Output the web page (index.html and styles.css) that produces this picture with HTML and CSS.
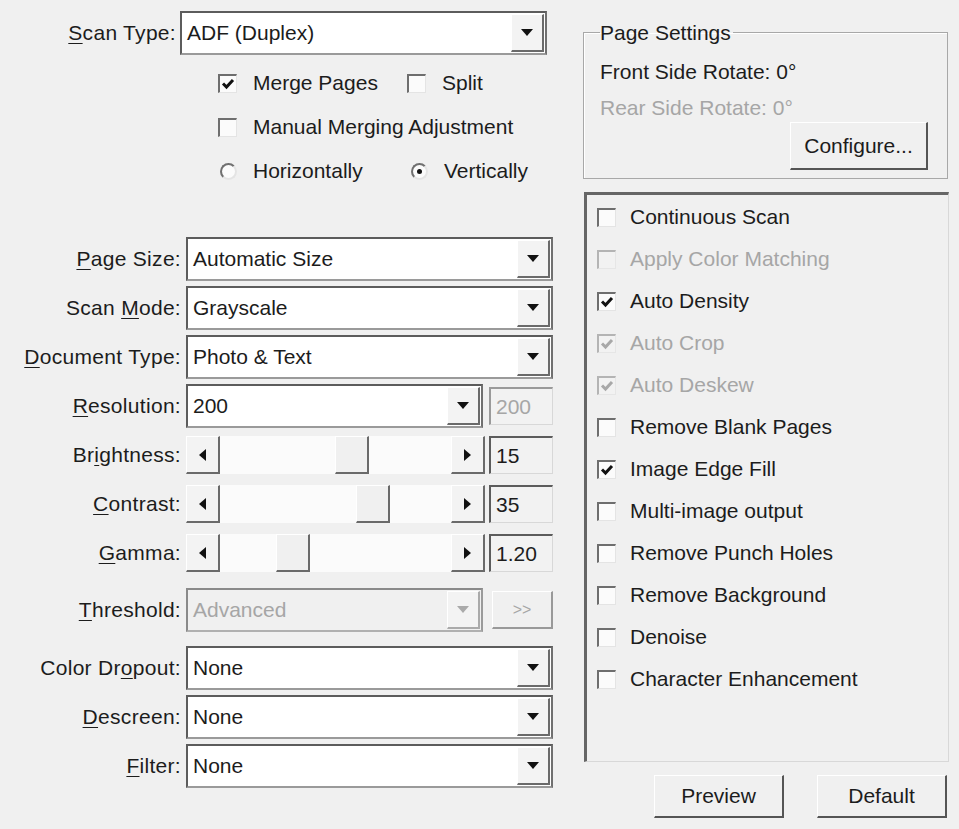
FILE: index.html
```html
<!DOCTYPE html>
<html>
<head>
<meta charset="utf-8">
<link rel="stylesheet" href="styles.css">
</head>
<body>
<div class="dialog">
  <div class="left">
    <div class="scan-row">
      <span class="lbl scan-lbl"><u>S</u>can Type:</span>
      <div class="combo scan-combo"><span class="val">ADF (Duplex)</span><span class="drop"><i class="tri"></i></span></div>
    </div>
    <div class="opts">
      <div class="optline">
        <span class="item merge"><span class="chk on"><svg viewBox="0 0 14 14"><path d="M2 6.5 L5.5 10 L12 3" /></svg></span>Merge Pages</span>
        <span class="item"><span class="chk"></span>Split</span>
      </div>
      <div class="optline">
        <span class="item"><span class="chk"></span>Manual Merging Adjustment</span>
      </div>
      <div class="optline">
        <span class="item horiz"><span class="radio"></span>Horizontally</span>
        <span class="item"><span class="radio sel"></span>Vertically</span>
      </div>
    </div>
    <div class="form">
      <div class="frow">
        <span class="lbl"><u>P</u>age Size:</span>
        <div class="combo"><span class="val">Automatic Size</span><span class="drop"><i class="tri"></i></span></div>
      </div>
      <div class="frow">
        <span class="lbl">Scan <u>M</u>ode:</span>
        <div class="combo"><span class="val">Grayscale</span><span class="drop"><i class="tri"></i></span></div>
      </div>
      <div class="frow">
        <span class="lbl"><u>D</u>ocument Type:</span>
        <div class="combo"><span class="val">Photo &amp; Text</span><span class="drop"><i class="tri"></i></span></div>
      </div>
      <div class="frow">
        <span class="lbl"><u>R</u>esolution:</span>
        <div class="pair">
          <div class="combo short"><span class="val">200</span><span class="drop"><i class="tri"></i></span></div>
          <div class="edit dis">200</div>
        </div>
      </div>
      <div class="frow">
        <span class="lbl">Br<u>i</u>ghtness:</span>
        <div class="pair">
          <div class="slider">
            <span class="arrow"><i class="tri-l"></i></span>
            <span class="track"><span class="thumb" style="left:115px"></span></span>
            <span class="arrow"><i class="tri-r"></i></span>
          </div>
          <div class="edit">15</div>
        </div>
      </div>
      <div class="frow">
        <span class="lbl"><u>C</u>ontrast:</span>
        <div class="pair">
          <div class="slider">
            <span class="arrow"><i class="tri-l"></i></span>
            <span class="track"><span class="thumb" style="left:136px"></span></span>
            <span class="arrow"><i class="tri-r"></i></span>
          </div>
          <div class="edit">35</div>
        </div>
      </div>
      <div class="frow">
        <span class="lbl"><u>G</u>amma:</span>
        <div class="pair">
          <div class="slider">
            <span class="arrow"><i class="tri-l"></i></span>
            <span class="track"><span class="thumb" style="left:56px"></span></span>
            <span class="arrow"><i class="tri-r"></i></span>
          </div>
          <div class="edit">1.20</div>
        </div>
      </div>
      <div class="frow thresh">
        <span class="lbl"><u>T</u>hreshold:</span>
        <div class="pair">
          <div class="combo short dis"><span class="val">Advanced</span><span class="drop"><i class="tri"></i></span></div>
          <div class="btn small dis">&gt;&gt;</div>
        </div>
      </div>
      <div class="frow dropout">
        <span class="lbl">Color Dr<u>o</u>pout:</span>
        <div class="combo"><span class="val">None</span><span class="drop"><i class="tri"></i></span></div>
      </div>
      <div class="frow">
        <span class="lbl"><u>D</u>escreen:</span>
        <div class="combo"><span class="val">None</span><span class="drop"><i class="tri"></i></span></div>
      </div>
      <div class="frow">
        <span class="lbl"><u>F</u>ilter:</span>
        <div class="combo"><span class="val">None</span><span class="drop"><i class="tri"></i></span></div>
      </div>
    </div>
  </div>

  <div class="right">
    <fieldset class="group">
      <legend>Page Settings</legend>
      <div class="gline">Front Side Rotate: 0°</div>
      <div class="gline dis-text">Rear Side Rotate: 0°</div>
      <div class="cfg-row"><div class="btn cfg">Configure...</div></div>
    </fieldset>
    <div class="panel">
      <div class="prow"><span class="chk"></span>Continuous Scan</div>
      <div class="prow dis-text"><span class="chk dis"></span>Apply Color Matching</div>
      <div class="prow"><span class="chk on"><svg viewBox="0 0 14 14"><path d="M2 6.5 L5.5 10 L12 3" /></svg></span>Auto Density</div>
      <div class="prow dis-text"><span class="chk on dis"><svg viewBox="0 0 14 14"><path d="M2 6.5 L5.5 10 L12 3" /></svg></span>Auto Crop</div>
      <div class="prow dis-text"><span class="chk on dis"><svg viewBox="0 0 14 14"><path d="M2 6.5 L5.5 10 L12 3" /></svg></span>Auto Deskew</div>
      <div class="prow"><span class="chk"></span>Remove Blank Pages</div>
      <div class="prow"><span class="chk on"><svg viewBox="0 0 14 14"><path d="M2 6.5 L5.5 10 L12 3" /></svg></span>Image Edge Fill</div>
      <div class="prow"><span class="chk"></span>Multi-image output</div>
      <div class="prow"><span class="chk"></span>Remove Punch Holes</div>
      <div class="prow"><span class="chk"></span>Remove Background</div>
      <div class="prow"><span class="chk"></span>Denoise</div>
      <div class="prow"><span class="chk"></span>Character Enhancement</div>
    </div>
    <div class="btns">
      <div class="btn big">Preview</div>
      <div class="btn big">Default</div>
    </div>
  </div>
</div>
</body>
</html>
```

FILE: styles.css
```css
html, body {
  margin: 0;
  padding: 0;
  background: #f0f0f0;
}
body {
  font-family: "Liberation Sans", Arial, sans-serif;
  font-size: 21px;
  color: #1c1c1c;
  width: 959px;
  height: 829px;
  overflow: hidden;
}
.dialog {
  display: grid;
  grid-template-columns: 560px 366px;
  column-gap: 23px;
}
.left {
  display: flex;
  flex-direction: column;
}
.lbl {
  text-align: right;
  white-space: nowrap;
  letter-spacing: 0.3px;
}
.lbl u {
  text-decoration-thickness: 1px;
  text-underline-offset: 3px;
}

/* scan type */
.scan-row {
  display: flex;
  align-items: center;
  margin-top: 14px;
  height: 37px;
}
.scan-lbl {
  width: 176px;
  margin-right: 4px;
}
.scan-combo {
  width: 364px;
  height: 37px;
}

/* combo */
.combo {
  box-sizing: border-box;
  height: 44px;
  width: 367px;
  background: #fff;
  border-style: solid;
  border-width: 2px;
  border-color: #5c5c5c #707070 #9a9a9a #5c5c5c;
  display: flex;
  align-items: center;
  justify-content: space-between;
}
.combo .val {
  padding-left: 5px;
  white-space: nowrap;
}
.combo .drop {
  align-self: stretch;
  width: 30px;
  margin: 1px 1px 1px 0;
  background: #f3f3f3;
  border-right: 2px solid #6a6a6a;
  border-bottom: 2px solid #6a6a6a;
  border-top: 1px solid #fff;
  border-left: 1px solid #fff;
  display: flex;
  align-items: center;
  justify-content: center;
}
.tri {
  width: 0;
  height: 0;
  border-left: 6px solid transparent;
  border-right: 6px solid transparent;
  border-top: 7px solid #111;
}
.combo.dis {
  background: #f0f0f0;
  border-color: #8a8a8a #9a9a9a #b0b0b0 #8a8a8a;
  color: #a6a6a6;
}
.combo.dis .tri {
  border-top-color: #aaa;
}
.combo.dis .drop {
  border-right-color: #aaa;
  border-bottom-color: #aaa;
}

/* checkbox / radio options */
.opts {
  margin-top: 10px;
  margin-left: 218px;
  display: flex;
  flex-direction: column;
}
.optline {
  height: 44px;
  display: flex;
  align-items: center;
}
.item {
  display: inline-flex;
  align-items: center;
  white-space: nowrap;
}
.item.merge {
  width: 189px;
}
.item.horiz {
  width: 191px;
}
.chk {
  box-sizing: border-box;
  width: 19px;
  height: 19px;
  background: #fbfbfb;
  border-style: solid;
  border-width: 2px 1px 1px 2px;
  border-color: #6e6e6e #e4e4e4 #e4e4e4 #6e6e6e;
  margin-right: 16px;
  flex: none;
  display: inline-flex;
  align-items: center;
  justify-content: center;
}
.chk svg {
  width: 14px;
  height: 14px;
}
.chk svg path {
  fill: none;
  stroke: #111;
  stroke-width: 3;
}
.chk.dis {
  background: #f2f2f2;
  border-color: #b4b4b4 #e6e6e6 #e6e6e6 #b4b4b4;
}
.chk.dis svg path {
  stroke: #a8a8a8;
}
.radio {
  box-sizing: border-box;
  width: 17px;
  height: 17px;
  border-radius: 50%;
  background: #fbfbfb;
  border: 2px solid;
  border-color: #707070 #e4e4e4 #e4e4e4 #707070;
  margin-right: 16px;
  margin-left: 2px;
  flex: none;
  display: inline-flex;
  align-items: center;
  justify-content: center;
}
.radio.sel::after {
  content: "";
  width: 5px;
  height: 5px;
  border-radius: 50%;
  background: #111;
}

/* form rows */
.form {
  margin-top: 44px;
  display: flex;
  flex-direction: column;
  gap: 5px;
}
.frow {
  display: grid;
  grid-template-columns: 181px 367px;
  column-gap: 5px;
  align-items: center;
  height: 44px;
}
.frow.thresh {
  margin-top: 8px;
}
.frow.dropout {
  margin-top: 9px;
}
.pair {
  display: flex;
  align-items: center;
  justify-content: space-between;
}
.combo.short {
  width: 297px;
}
.edit {
  box-sizing: border-box;
  width: 64px;
  height: 38px;
  background: #f2f2f2;
  border-style: solid;
  border-width: 2px 1px 1px 2px;
  border-color: #5c5c5c #d8d8d8 #d8d8d8 #5c5c5c;
  padding-left: 5px;
  display: flex;
  align-items: center;
}
.edit.dis {
  color: #a6a6a6;
  border-color: #9a9a9a #d8d8d8 #d8d8d8 #9a9a9a;
}

/* slider (scrollbar) */
.slider {
  box-sizing: border-box;
  width: 299px;
  height: 38px;
  display: flex;
  background: #fafafa;
}
.arrow {
  box-sizing: border-box;
  width: 34px;
  height: 38px;
  background: #f3f3f3;
  border-right: 2px solid #6a6a6a;
  border-bottom: 2px solid #6a6a6a;
  border-top: 1px solid #fff;
  border-left: 1px solid #fff;
  display: flex;
  align-items: center;
  justify-content: center;
  flex: none;
}
.tri-l {
  width: 0;
  height: 0;
  border-top: 6px solid transparent;
  border-bottom: 6px solid transparent;
  border-right: 7px solid #111;
}
.tri-r {
  width: 0;
  height: 0;
  border-top: 6px solid transparent;
  border-bottom: 6px solid transparent;
  border-left: 7px solid #111;
}
.track {
  flex: 1;
  position: relative;
  background: #fbfbfb;
}
.thumb {
  position: absolute;
  top: 0;
  box-sizing: border-box;
  width: 34px;
  height: 38px;
  background: #f0f0f0;
  border-right: 2px solid #6a6a6a;
  border-bottom: 2px solid #6a6a6a;
  border-top: 1px solid #fff;
  border-left: 1px solid #fff;
}

/* buttons */
.btn {
  box-sizing: border-box;
  background: #f0f0f0;
  border-style: solid;
  border-width: 1px 2px 2px 1px;
  border-color: #fff #555 #555 #fff;
  display: flex;
  align-items: center;
  justify-content: center;
  white-space: nowrap;
}
.btn.small {
  width: 61px;
  height: 38px;
  font-size: 16px;
}
.btn.dis {
  color: #a6a6a6;
  border-color: #fff #999 #999 #fff;
}

/* right column */
.right {
  display: flex;
  flex-direction: column;
}
.group {
  margin: 21px 0 0 0;
  padding: 10px 16px 6px 16px;
  width: 365px;
  box-sizing: border-box;
  height: 158px;
  border: 1px solid #a8a8a8;
  box-shadow: inset 1px 1px 0 #fff;
}
.group legend {
  padding: 0 2px 0 0;
  margin-left: 0;
  line-height: 23px;
}
.gline {
  height: 36px;
  display: flex;
  align-items: center;
  white-space: nowrap;
}
.dis-text {
  color: #a6a6a6;
}
.cfg-row {
  display: flex;
  justify-content: flex-end;
  margin-top: -4px;
  padding-right: 3px;
}
.btn.cfg {
  width: 138px;
  height: 48px;
}
.panel {
  box-sizing: border-box;
  margin-top: 13px;
  margin-left: 1px;
  width: 365px;
  height: 570px;
  border-style: solid;
  border-width: 3px 1px 1px 3px;
  border-color: #666 #d8d8d8 #d8d8d8 #666;
  padding: 1px 0 0 10px;
  display: flex;
  flex-direction: column;
}
.prow {
  height: 42px;
  display: flex;
  align-items: center;
  white-space: nowrap;
}
.prow .chk {
  margin-right: 14px;
}
.btns {
  margin-top: 13px;
  display: flex;
  gap: 33px;
  padding-left: 71px;
}
.btn.big {
  width: 130px;
  height: 43px;
}
```
